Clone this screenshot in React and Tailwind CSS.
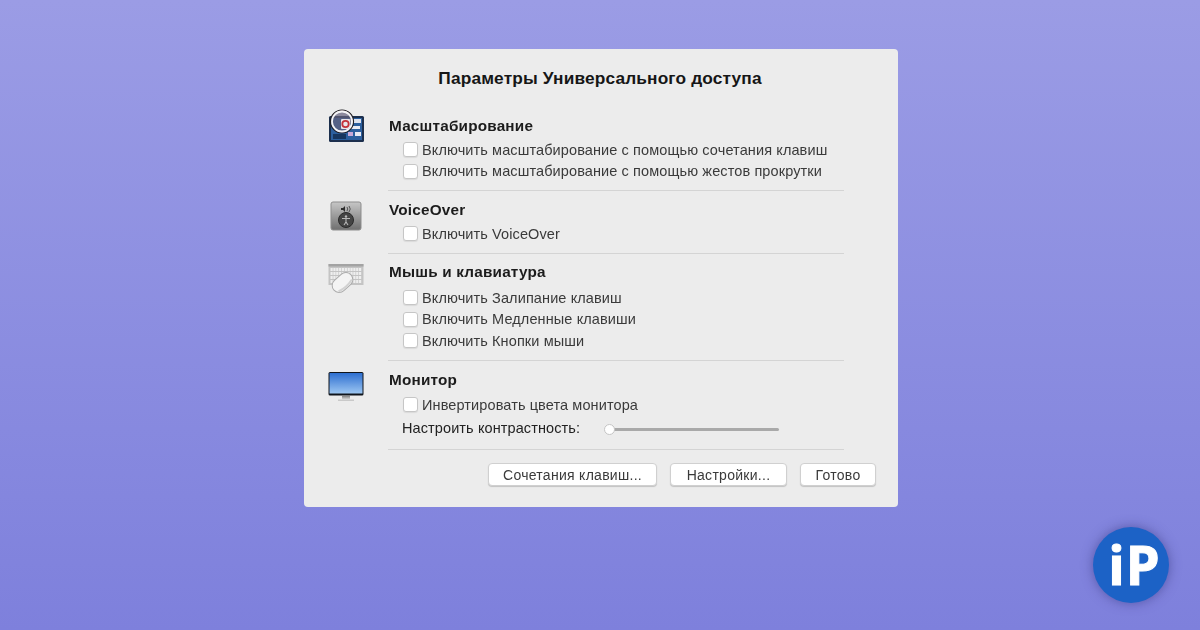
import React from "react";

function ZoomIcon() {
  return (
    <svg width="38" height="36" viewBox="0 0 38 36">
      <rect x="1" y="7" width="35" height="26" rx="1.5" fill="#1c2f4d" />
      <rect x="3" y="9" width="31" height="22" fill="#2c5f9e" />
      <rect x="20" y="10" width="13" height="4" fill="#dfe3ee" />
      <rect x="22" y="17" width="10" height="3" fill="#e8eaf4" />
      <rect x="20" y="23" width="5" height="4" fill="#c9a9d6" />
      <rect x="27" y="23" width="6" height="4" fill="#e8eaf4" />
      <rect x="5" y="25" width="13" height="5" fill="#17365f" />
      <circle cx="14" cy="12.5" r="11.5" fill="#8a2430" fillOpacity="0.3" stroke="#1d1d22" strokeWidth="1.2" />
      <circle cx="14" cy="12.5" r="10" fill="#5f6f8e" fillOpacity="0.6" stroke="#f4f4f6" strokeWidth="1.8" />
      <rect x="13" y="10" width="9" height="10" rx="1" fill="#e9e6ea" />
      <circle cx="17.5" cy="15" r="3.2" fill="none" stroke="#c4313a" strokeWidth="1.8" />
    </svg>
  );
}

function VoiceOverIcon() {
  return (
    <svg width="32" height="32" viewBox="0 0 32 32">
      <defs>
        <linearGradient id="vo" x1="0" y1="0" x2="0" y2="1">
          <stop offset="0" stopColor="#c6c6c6" />
          <stop offset="1" stopColor="#6f6f6f" />
        </linearGradient>
      </defs>
      <rect x="1" y="1" width="30" height="28" rx="2" fill="url(#vo)" stroke="#8d8d8d" />
      <path d="M11 7h2l2-2v6l-2-2h-2z" fill="#2d2d2d" />
      <path d="M17 6q1.5 2 0 4M19 5q2.5 3 0 6" fill="none" stroke="#555" />
      <circle cx="16" cy="19" r="7.5" fill="#444" stroke="#2a2a2a" />
      <circle cx="16" cy="15.5" r="1.2" fill="#b8b8b8" />
      <path d="M12 17.5h8M16 17.5v3.5M16 21l-2 3M16 21l2 3" fill="none" stroke="#b8b8b8" strokeWidth="1.1" />
    </svg>
  );
}

function KeyboardIcon() {
  const keys = [];
  for (let r = 0; r < 4; r++) {
    for (let c = 0; c < 11; c++) {
      keys.push(<rect key={r + "-" + c} x={2.5 + c * 2.85} y={5 + r * 4} width="2.2" height="3" fill="#eeeeee" />);
    }
  }
  return (
    <svg width="36" height="32" viewBox="0 0 36 32">
      <rect x="0.5" y="1" width="35" height="21" fill="#c4c4c4" />
      <rect x="0.5" y="1" width="35" height="2.5" fill="#a3a3a3" />
      {keys}
      <g transform="rotate(-42 14.5 19.5)">
        <rect x="3" y="12.5" width="23" height="14" rx="7" fill="#f4f4f4" stroke="#ababab" />
        <path d="M5.5 23.5q9 2.5 18 0" fill="none" stroke="#d2d2d2" strokeWidth="2" />
      </g>
    </svg>
  );
}

function MonitorIcon() {
  return (
    <svg width="36" height="32" viewBox="0 0 36 32">
      <defs>
        <linearGradient id="scr" x1="0" y1="0" x2="0" y2="1">
          <stop offset="0" stopColor="#2e6fd0" />
          <stop offset="1" stopColor="#9cc6f2" />
        </linearGradient>
        <linearGradient id="st" x1="0" y1="0" x2="0" y2="1">
          <stop offset="0" stopColor="#777" />
          <stop offset="1" stopColor="#ddd" />
        </linearGradient>
      </defs>
      <rect x="0.5" y="1" width="35" height="23.5" rx="1.5" fill="#10151c" />
      <rect x="1.5" y="2" width="33" height="20.5" fill="url(#scr)" />
      <rect x="14" y="24.5" width="8" height="4" fill="url(#st)" />
      <rect x="10" y="28.5" width="16" height="1.5" fill="#c9c9c9" />
    </svg>
  );
}

function CheckRow({ label }) {
  return (
    <div className="flex items-center h-[21.5px]">
      <div className="w-[15px] h-[15px] rounded-[3px] bg-white border border-[#c6c6c6] shadow-[0_1px_1px_rgba(0,0,0,0.08)] ml-[14px] mr-[4px]" />
      <span className="text-[14.5px] leading-none tracking-[0.11px] text-[#3a3a3a]">{label}</span>
    </div>
  );
}

function Section({ icon, title, iconClass, bodyClass, children }) {
  return (
    <div className="flex">
      <div className={"w-[85px] pl-[24px] shrink-0 " + iconClass}>{icon}</div>
      <div className={"flex-1 " + bodyClass}>
        <h2 className="text-[15.3px] leading-[20px] font-bold text-[#1c1c1c] tracking-[0.2px]">{title}</h2>
        {children}
      </div>
    </div>
  );
}

function Divider() {
  return <div className="h-px bg-[#d4d4d4] ml-[84px] mr-[54px]" />;
}

function Btn({ label, className }) {
  return (
    <button className={"h-[23px] rounded-[4px] bg-white border border-[#d0d0d0] shadow-[0_1px_1px_rgba(0,0,0,0.18)] text-[14px] leading-none tracking-[0.28px] text-[#3a3a3a] " + className}>
      {label}
    </button>
  );
}

export default function App() {
  return (
    <div
      className="relative w-[1200px] h-[630px] overflow-hidden bg-gradient-to-b from-[#9b9ce5] to-[#7e80dc] pt-[49px] pl-[304px]"
      style={{ fontFamily: '"Liberation Sans", Arial, sans-serif' }}
    >
      <div className="w-[594px] h-[458px] rounded-[4px] bg-[#ececec] [filter:blur(0.4px)]">
        <h1 className="pt-[18px] text-center text-[17.3px] leading-[22px] font-bold text-[#161616] tracking-[0.15px] -ml-[2px]">
          Параметры Универсального доступа
        </h1>

        <div className="h-[101px]">
          <Section icon={<ZoomIcon />} title="Масштабирование" iconClass="pt-[20px]" bodyClass="pt-[27px]">
            <div className="mt-[3px]">
              <CheckRow label="Включить масштабирование с помощью сочетания клавиш" />
              <CheckRow label="Включить масштабирование с помощью жестов прокрутки" />
            </div>
          </Section>
        </div>
        <Divider />

        <div className="h-[62px]">
          <Section icon={<VoiceOverIcon />} title="VoiceOver" iconClass="pt-[10px] pl-[26px]" bodyClass="pt-[9px]">
            <div className="mt-[3px]">
              <CheckRow label="Включить VoiceOver" />
            </div>
          </Section>
        </div>
        <Divider />

        <div className="h-[106px]">
          <Section icon={<KeyboardIcon />} title="Мышь и клавиатура" iconClass="pt-[9px]" bodyClass="pt-[8px]">
            <div className="mt-[5px]">
              <CheckRow label="Включить Залипание клавиш" />
              <CheckRow label="Включить Медленные клавиши" />
              <CheckRow label="Включить Кнопки мыши" />
            </div>
          </Section>
        </div>
        <Divider />

        <div className="h-[88px]">
          <Section icon={<MonitorIcon />} title="Монитор" iconClass="pt-[10px]" bodyClass="pt-[9px]">
            <div className="mt-[4px]">
              <CheckRow label="Инвертировать цвета монитора" />
            </div>
            <div className="flex items-center mt-[1px] h-[24px] pl-[13px]">
              <span className="text-[14.5px] leading-none tracking-[0.1px] text-[#222] w-[203px] shrink-0">Настроить контрастность:</span>
              <div className="relative w-[174px] h-[3px] mt-[2px] rounded-full bg-[#a9a9a9]">
                <div className="absolute -left-[1px] -top-[4px] w-[11px] h-[11px] rounded-full bg-white border border-[#c4c4c4]" />
              </div>
            </div>
          </Section>
        </div>
        <Divider />

        <div className="flex justify-end gap-[13px] pt-[13px] pr-[22px]">
          <Btn label="Сочетания клавиш..." className="w-[169px]" />
          <Btn label="Настройки..." className="w-[117px]" />
          <Btn label="Готово" className="w-[76px]" />
        </div>
      </div>

      <div className="absolute left-[1093px] top-[527px] w-[76px] h-[76px] rounded-full bg-[#1c62c6] shadow-[0_0_12px_rgba(50,50,120,0.55)] flex items-center justify-center">
        <span
          className="text-white font-bold text-[54px] leading-none tracking-[1px] -mt-[2px] ml-[7px] [-webkit-text-stroke:1px_white]"
          style={{ fontFamily: '"Open Sans", sans-serif' }}
        >
          iP
        </span>
      </div>
    </div>
  );
}
